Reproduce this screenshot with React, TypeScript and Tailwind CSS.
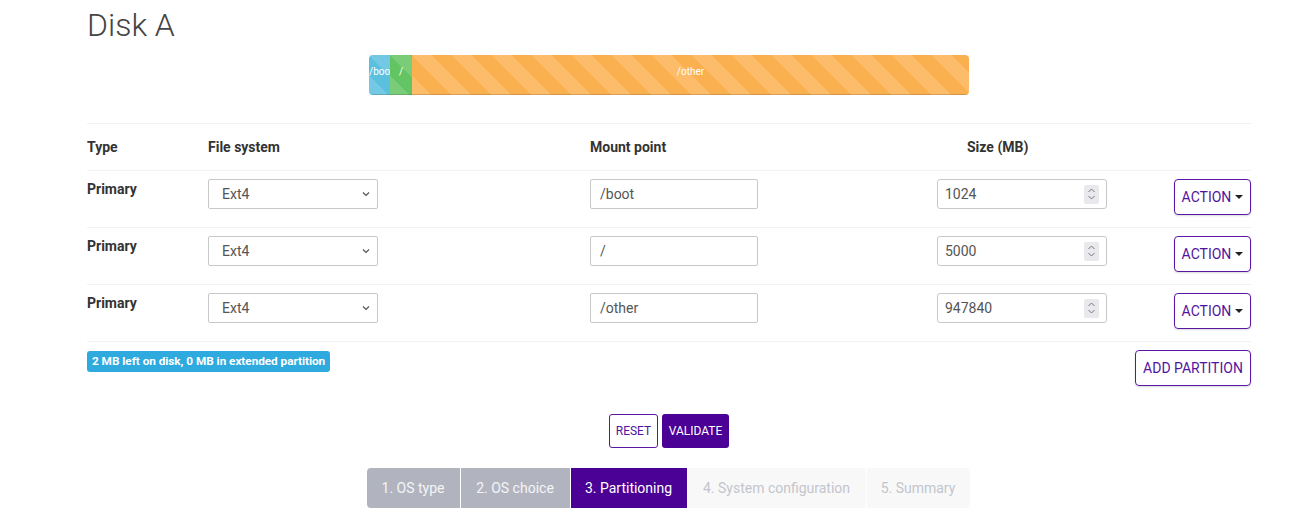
import React from "react";

type Part = { fs: string; mount: string; size: string };

const parts: Part[] = [
  { fs: "Ext4", mount: "/boot", size: "1024" },
  { fs: "Ext4", mount: "/", size: "5000" },
  { fs: "Ext4", mount: "/other", size: "947840" },
];

const stripes =
  "bg-[linear-gradient(45deg,rgba(255,255,255,.15)_25%,transparent_25%,transparent_50%,rgba(255,255,255,.15)_50%,rgba(255,255,255,.15)_75%,transparent_75%,transparent)] bg-[length:40px_40px]";

const steps = [
  { label: "1. OS type", state: "done", w: "w-[93px]" },
  { label: "2. OS choice", state: "done", w: "w-[110px]" },
  { label: "3. Partitioning", state: "active", w: "w-[117px]" },
  { label: "4. System configuration", state: "todo", w: "w-[179px]" },
  { label: "5. Summary", state: "todo", w: "w-[104px]" },
];

function Chevron() {
  return (
    <svg width="10" height="10" viewBox="0 0 10 10" className="text-[#555]">
      <path d="M2 3.5 L5 6.5 L8 3.5" fill="none" stroke="currentColor" strokeWidth="1.2" />
    </svg>
  );
}

function Spinner() {
  return (
    <div className="flex h-[19px] w-[15px] flex-col items-center justify-center rounded-[2px] bg-[#e9e9ed]">
      <svg width="9" height="14" viewBox="0 0 9 14" className="text-[#777]">
        <path d="M1.5 5 L4.5 2 L7.5 5" fill="none" stroke="currentColor" strokeWidth="1" />
        <path d="M1.5 9 L4.5 12 L7.5 9" fill="none" stroke="currentColor" strokeWidth="1" />
      </svg>
    </div>
  );
}

function Row({ p }: { p: Part }) {
  return (
    <div className="grid h-[57px] grid-cols-[121px_382px_347px_1fr_auto] border-t border-[#f2f2f2] pt-[8px]">
      <div className="text-[14px] font-bold leading-[20px] text-[#333]">Primary</div>
      <div>
        <div className="flex h-[30px] w-[170px] items-center justify-between rounded-[2px] border border-[#c8c8c8] pl-[13px] pr-[6px] text-[14px] text-[#555]">
          <span>{p.fs}</span>
          <Chevron />
        </div>
      </div>
      <div>
        <div className="flex h-[30px] w-[168px] items-center rounded-[2px] border border-[#c8c8c8] pl-[9px] text-[14px] text-[#555]">
          {p.mount}
        </div>
      </div>
      <div>
        <div className="flex h-[30px] w-[170px] items-center justify-between rounded-[3px] border border-[#c8c8c8] pl-[7px] pr-[7px] text-[14px] text-[#555]">
          <span>{p.size}</span>
          <Spinner />
        </div>
      </div>
      <div>
        <button className="flex h-[36px] w-[77px] items-center justify-center gap-[4px] rounded-[4px] border-[1.5px] border-[#5a17a6] text-[14px] text-[#5214a0] shadow-[0_1px_2px_rgba(0,0,0,0.15)]">
          ACTION
          <span className="inline-block h-0 w-0 border-x-[4px] border-t-[4px] border-x-transparent border-t-[#222]" />
        </button>
      </div>
    </div>
  );
}

export default function App() {
  return (
    <div className="min-h-[523px] bg-white font-['Roboto',sans-serif]">
      <div className="ml-[87px] w-[1164px] pt-[5px]">
        <h1 className="text-[32px] font-light leading-[40px] text-[#444]">Disk A</h1>

        <div className="mt-[10px] flex justify-center">
          <div className="flex h-[40px] w-[600px] overflow-hidden rounded-[4px] text-[10px] leading-[33px] text-white">
            <div className={`w-[21px] bg-[#5bc0de] shadow-[inset_0_-1px_0_rgba(0,0,0,0.15)] ${stripes} overflow-hidden whitespace-nowrap text-left`}>
              /boo
            </div>
            <div className={`w-[22px] bg-[#62c462] shadow-[inset_0_-1px_0_rgba(0,0,0,0.15)] ${stripes} text-center`}>
              /
            </div>
            <div className={`flex-1 bg-[#fbb04f] shadow-[inset_0_-1px_0_rgba(0,0,0,0.15)] ${stripes} text-center`}>
              /other
            </div>
          </div>
        </div>

        <div className="mt-[28px]">
          <div className="grid h-[47px] grid-cols-[121px_382px_347px_1fr_auto] items-center border-t border-[#f2f2f2] text-[14px] font-bold text-[#333]">
            <div>Type</div>
            <div>File system</div>
            <div>Mount point</div>
            <div className="pl-[30px]">Size (MB)</div>
            <div className="w-[77px]" />
          </div>
          {parts.map((p, i) => (
            <Row key={i} p={p} />
          ))}
          <div className="flex items-start justify-between border-t border-[#f2f2f2] pt-[8px]">
            <span className="mt-[1px] rounded-[3px] bg-[#2eaadf] px-[5px] py-[3px] text-[11.8px] font-bold leading-[15px] tracking-[-0.05px] text-white">
              2 MB left on disk, 0 MB in extended partition
            </span>
            <button className="h-[36px] w-[116px] rounded-[4px] border-[1.5px] border-[#5a17a6] text-[14px] text-[#5214a0] shadow-[0_1px_2px_rgba(0,0,0,0.15)]">
              ADD PARTITION
            </button>
          </div>
        </div>

        <div className="mt-[28px] flex justify-center gap-[4px]">
          <button className="h-[34px] w-[49px] rounded-[3px] border-[1.5px] border-[#5a17a6] text-[12px] text-[#5214a0]">
            RESET
          </button>
          <button className="h-[34px] w-[67px] rounded-[3px] bg-[#4b0096] text-[12px] text-white">
            VALIDATE
          </button>
        </div>

        <div className="mt-[20px] flex justify-center">
          <div className="-ml-[2px] flex h-[40px] overflow-hidden rounded-[4px] text-[14px]">
            {steps.map((s, i) => (
              <div
                key={i}
                className={`flex items-center justify-center ${s.w} ${
                  s.state === "done"
                    ? "bg-[#b1b4bf] text-[#f4f4f6]"
                    : s.state === "active"
                    ? "bg-[#4b0096] text-white"
                    : "bg-[#f8f8f9] text-[#c3c5cc]"
                } ${i > 0 ? "border-l border-white" : ""}`}
              >
                {s.label}
              </div>
            ))}
          </div>
        </div>
      </div>
    </div>
  );
}
